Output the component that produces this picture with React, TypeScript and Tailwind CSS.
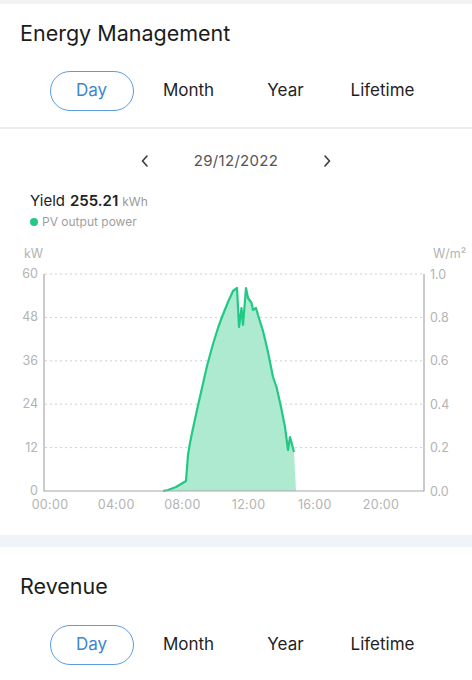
import React from "react";

const tabs = ["Day", "Month", "Year", "Lifetime"];

const TabRow = ({ className = "" }: { className?: string }) => (
  <div className={`grid grid-cols-4 w-[388px] ml-[43px] ${className}`}>
    {tabs.map((t, i) => (
      <div key={t} className="flex justify-center">
        {i === 0 ? (
          <div className="w-[84px] h-[40px] rounded-full border-[1.5px] border-[#5b9be0] flex items-center justify-center text-[17px] text-[#3d86d0]">
            {t}
          </div>
        ) : (
          <div className="h-[40px] flex items-center text-[17px] text-[#1f1f1f]">{t}</div>
        )}
      </div>
    ))}
  </div>
);

const gridYs = [274, 317.4, 360.8, 404.2, 447.6, 491];
const leftLabels = ["60", "48", "36", "24", "12", "0"];
const rightLabels = ["1.0", "0.8", "0.6", "0.4", "0.2", "0.0"];
const xLabels = ["00:00", "04:00", "08:00", "12:00", "16:00", "20:00"];

const curve =
  "M163,491 L168,490 L176,487 L186,481 L188,455 L190,443 L192,433 L197,410 L202,388 L207,366 L213,344 L218,328 L222,317 L228,302 L233,291 L237,288 L239,327 L241.5,308 L243,325 L246,288 L248,298 L251.5,303 L253,310 L256,308 L258,315 L263,331 L268,352 L273,377 L276.5,387 L281,407 L285,427 L288,450 L290,437 L294,452";

const Chart = () => (
  <svg width="472" height="280" viewBox="0 240 472 280" className="block">
    <g fontFamily="Inter, 'Liberation Sans', sans-serif" fontSize="12.5" fill="#b3b3b3">
      <text x="24" y="258">kW</text>
      <text x="433" y="258">
        W/m²
      </text>
      {gridYs.map((y, i) => (
        <g key={y}>
          {i < 5 && (
            <line x1="45" x2="424" y1={y} y2={y} stroke="#cfcfcf" strokeWidth="1" strokeDasharray="2 3" />
          )}
          <text x="38" y={y + 4} textAnchor="end">
            {leftLabels[i]}
          </text>
          <text x="430" y={y + 4.5}>
            {rightLabels[i]}
          </text>
        </g>
      ))}
      {xLabels.map((l, i) => (
        <text key={l} x={50 + i * 66.2} y="509" textAnchor="middle" letterSpacing="0.3">
          {l}
        </text>
      ))}
    </g>
    <path d={curve + " L296,491 Z"} fill="#aeead0" />
    <path d={curve} fill="none" stroke="#22c985" strokeWidth="2.2" strokeLinejoin="round" />
    <line x1="44" x2="44" y1="274" y2="491.5" stroke="#a8a8a8" strokeWidth="1.2" />
    <line x1="424" x2="424" y1="274" y2="491.5" stroke="#a8a8a8" strokeWidth="1.2" />
    <line x1="44" x2="424" y1="491" y2="491" stroke="#a8a8a8" strokeWidth="1.2" />
  </svg>
);

const Chevron = ({ dir }: { dir: "left" | "right" }) => (
  <svg width="10" height="14" viewBox="0 0 10 14">
    <path
      d={dir === "left" ? "M7,2 L2.5,7 L7,12" : "M3,2 L7.5,7 L3,12"}
      fill="none"
      stroke="#3a3a3a"
      strokeWidth="1.6"
      strokeLinecap="round"
      strokeLinejoin="round"
    />
  </svg>
);

export default function App() {
  return (
    <div className="w-[472px] h-[680px] overflow-hidden bg-[#f2f3f5] font-['Inter','Liberation_Sans',sans-serif]">
      <div className="h-[4px]" />
      {/* Energy header */}
      <div className="bg-white h-[123px] pt-[15px]">
        <h1 className="pl-[20px] text-[21.5px] leading-[28px] text-[#1c1c1c]">Energy Management</h1>
        <TabRow className="mt-[24px]" />
      </div>
      <div className="h-[2px] bg-[#ececec]" />
      {/* chart card */}
      <div className="bg-white h-[406px] pt-[20px]">
        <div className="flex items-center justify-center gap-[44px] h-[24px]">
          <Chevron dir="left" />
          <span className="text-[15px] text-[#555] tracking-[0.3px]">29/12/2022</span>
          <Chevron dir="right" />
        </div>
        <div className="pl-[30px] mt-[18px] h-[20px] flex items-baseline gap-[5px] text-[15px] leading-[20px] text-[#222]">
          <span>Yield</span>
          <span className="font-semibold">255.21</span>
          <span className="text-[12px] text-[#9a9a9a] -ml-[1px]">kWh</span>
        </div>
        <div className="pl-[30px] mt-[3px] h-[16px] flex items-center gap-[4px]">
          <span className="w-[8px] h-[8px] rounded-full bg-[#22c985]" />
          <span className="text-[12px] text-[#a0a0a0]">PV output power</span>
        </div>
        <div className="mt-[10px]">
          <Chart />
        </div>
      </div>
      <div className="h-[12px] bg-[#f0f3f7]" />
      {/* Revenue */}
      <div className="bg-white h-[133px] pt-[25px]">
        <h2 className="pl-[20px] text-[21.5px] leading-[28px] text-[#1c1c1c]">Revenue</h2>
        <TabRow className="mt-[25px]" />
      </div>
    </div>
  );
}
